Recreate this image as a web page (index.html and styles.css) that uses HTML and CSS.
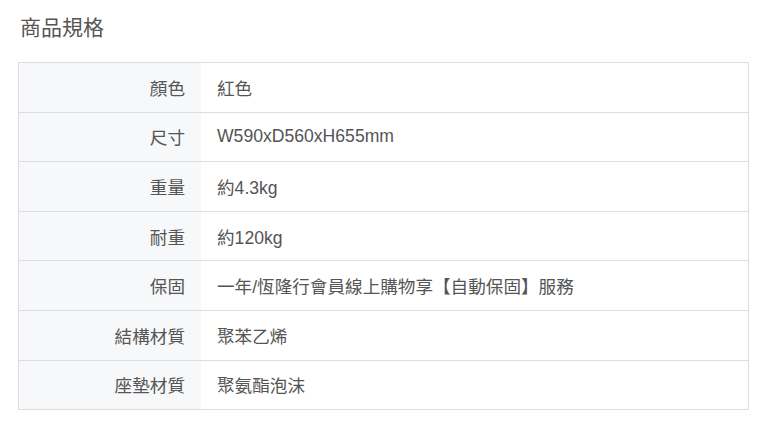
FILE: index.html
```html
<!DOCTYPE html>
<html lang="zh-Hant">
<head>
  <meta charset="UTF-8" />
  <meta name="viewport" content="width=device-width, initial-scale=1.0" />
  <title>商品規格</title>
  <link rel="stylesheet" href="styles.css">
</head>
<body>
<main>
  <h2 class="spec-title">商品規格</h2>
  <table class="spec-table">
    <tr><th>顏色</th><td>紅色</td></tr>
    <tr><th>尺寸</th><td>W590xD560xH655mm</td></tr>
    <tr><th>重量</th><td>約4.3kg</td></tr>
    <tr><th>耐重</th><td>約120kg</td></tr>
    <tr><th>保固</th><td>一年/恆隆行會員線上購物享【自動保固】服務</td></tr>
    <tr><th>結構材質</th><td>聚苯乙烯</td></tr>
    <tr><th>座墊材質</th><td>聚氨酯泡沫</td></tr>
  </table>
</main>
</body>
</html>
```

FILE: styles.css
```css
body {
  margin: 0;
  background: #fff;
  font-family: "Liberation Sans", Arial, "Noto Sans CJK TC", sans-serif;
  color: #555;
}

main {
  padding: 13px 21px 0 18px;
}

.spec-title {
  margin: 0 0 20px 2px;
  font-size: 21px;
  font-weight: normal;
  line-height: 29px;
  color: #555;
}

.spec-table {
  width: 731px;
  border-collapse: collapse;
  border: 1px solid #ddd;
  font-size: 17.6px;
}

.spec-table th,
.spec-table td {
  height: 48.6px;
  padding: 0 16px;
  border-top: 1px solid #ddd;
  vertical-align: middle;
}

.spec-table th {
  width: 150px;
  text-align: right;
  font-weight: normal;
  background: #f7f8fa;
  color: #555;
}

.spec-table td {
  text-align: left;
}
```
